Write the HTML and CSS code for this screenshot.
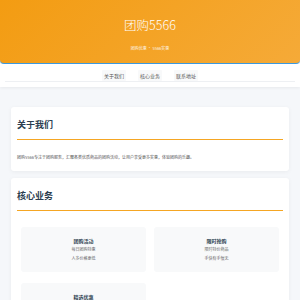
FILE: index.html
```html
<!DOCTYPE html>
<html lang="zh-CN">
<head>
    <meta charset="UTF-8">
    <title>团购5566</title>
    <link rel="stylesheet" href="styles.css">
</head>
<body>
<div class="header">
    <h1 class="logo">团购5566</h1>
    <p class="slogan">团购优惠 · 5566实惠</p>
</div>
<div class="nav">
    <ul class="menu">
        <li><a href="#about">关于我们</a></li>
        <li><a href="#business">核心业务</a></li>
        <li><a href="#contact">联系地址</a></li>
    </ul>
</div>
<div class="main">
    <div class="card" id="about">
        <h2>关于我们</h2>
        <p class="intro">团购5566专注于团购服务，汇聚各类优质商品的团购活动，让用户享受更多实惠，体验团购的乐趣。</p>
    </div>
    <div class="card" id="business">
        <h2>核心业务</h2>
        <div class="items">
            <div class="item">
                <h3>团购活动</h3>
                <p>每日团购特惠</p>
                <p>人多价格更低</p>
            </div>
            <div class="item">
                <h3>限时抢购</h3>
                <p>限时特价商品</p>
                <p>手快有手慢无</p>
            </div>
            <div class="item">
                <h3>精选优惠</h3>
                <p>精选品质好货</p>
                <p>优惠天天都有</p>
            </div>
        </div>
    </div>
</div>
</body>
</html>
```

FILE: styles.css
```css
html, body, div, p, h1, h2, h3, ul, li {
    margin: 0;
    padding: 0;
}

body {
    background: #f5f7fa;
    font-family: "Noto Sans CJK SC", "Noto Sans", sans-serif;
    color: #333;
}

.header {
    height: 64px;
    box-sizing: border-box;
    background: linear-gradient(135deg, #f39c12, #f5aa38);
    border-bottom: 1px solid #3d9be0;
    border-radius: 0 0 4px 4px;
    text-align: center;
    color: #fff;
    padding-top: 18px;
}

.logo {
    font-size: 12.5px;
    line-height: 14px;
    font-weight: 300;
}

.slogan {
    font-size: 4px;
    line-height: 6px;
    margin-top: 13px;
    opacity: 0.9;
}

.nav {
    background: #fff;
    padding: 6px 5px 5px;
    box-shadow: 0 1px 3px rgba(0, 0, 0, 0.06);
}

.menu {
    list-style: none;
    display: flex;
    justify-content: center;
    gap: 12px;
    border-bottom: 1px solid #eef0f3;
}

.menu a {
    display: block;
    width: 24px;
    height: 11px;
    line-height: 11px;
    text-align: center;
    background: #f8f9fa;
    color: #555;
    font-size: 5px;
    text-decoration: none;
    border-radius: 1px;
}

.main {
    padding: 20px 11px;
}

.card {
    background: #fff;
    border-radius: 3px;
    padding: 12px 6px 11px;
    box-shadow: 0 1px 4px rgba(0, 0, 0, 0.05);
    margin-bottom: 7px;
}

.card h2 {
    font-size: 9px;
    line-height: 12px;
    color: #2c3e50;
    padding-bottom: 8px;
    border-bottom: 1px solid #f5a623;
}

.intro {
    margin-top: 14px;
    font-size: 4px;
    line-height: 6px;
    color: #555;
}

.items {
    display: grid;
    grid-template-columns: 1fr 1fr;
    gap: 11px 8px;
    margin: 16px 4px 0;
}

.item {
    background: #f8f9fa;
    border-radius: 3px;
    padding: 10px 4px 9px;
    text-align: center;
}

.item h3 {
    font-size: 5px;
    line-height: 8px;
    color: #2c3e50;
}

.item p {
    font-size: 4px;
    line-height: 9px;
    color: #666;
}
```
